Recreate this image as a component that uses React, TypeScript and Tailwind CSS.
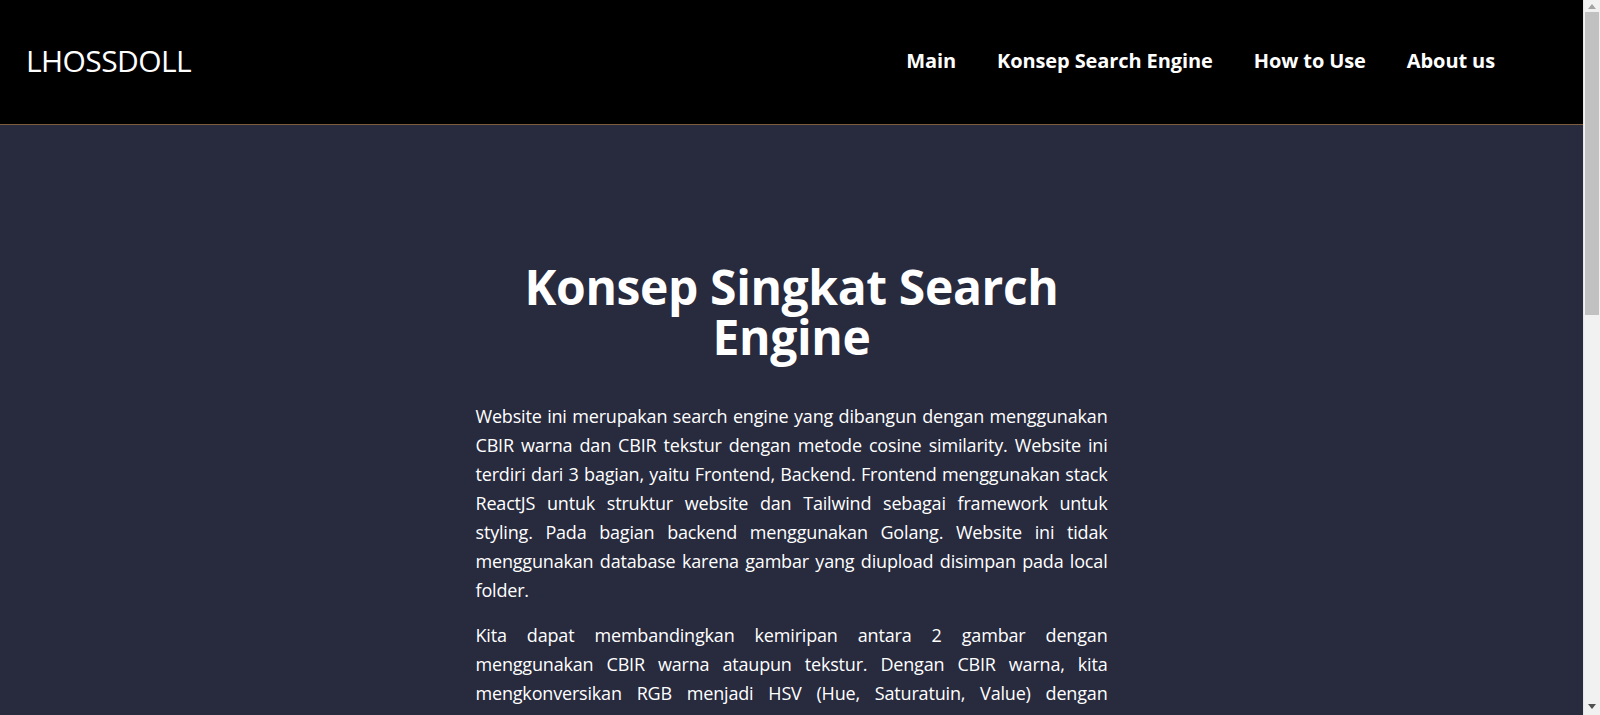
import React from 'react';

const navLinks = ['Main', 'Konsep Search Engine', 'How to Use', 'About us'];

const Navbar: React.FC = () => {
  return (
    <header className="flex h-[125px] items-center justify-between border-b border-[#7c5c3c] bg-black pb-[2px] pl-[26px] pr-[88px]">
      <a href="#" className="mb-[1px] text-[30px] tracking-[-0.02em] text-white">LHOSSDOLL</a>
      <nav className="flex items-center gap-[41px]">
        {navLinks.map((link) => (
          <a key={link} href="#" className="text-[20px] font-bold tracking-[-0.005em] text-white">
            {link}
          </a>
        ))}
      </nav>
    </header>
  );
}

// window scrollbar as seen in the screenshot
const ScrollBar: React.FC = () => {
  return (
    <aside className="flex w-[17px] shrink-0 flex-col border-l border-[#e6e6e6] bg-[#f1f1f1]">
      <div className="flex h-[12px] items-center justify-center">
        <svg width="8" height="5" viewBox="0 0 8 5">
          <path d="M4 0 L8 5 L0 5 Z" fill="#a3a3a3" />
        </svg>
      </div>
      <div className="mx-[1px] h-[303px] bg-[#c1c1c1]" />
      <div className="flex-1" />
      <div className="flex h-[17px] items-center justify-center">
        <svg width="8" height="5" viewBox="0 0 8 5">
          <path d="M0 0 L8 0 L4 5 Z" fill="#505050" />
        </svg>
      </div>
    </aside>
  );
}

export default function App() {
  return (
    <div className="flex h-screen bg-[#282a3e] font-['Open_Sans',sans-serif]">
      <main className="min-w-0 flex-1 overflow-hidden">
        <Navbar />

        {/* Konsep section */}
        <section className="mx-auto max-w-[672px] px-5 pt-[137px] pb-40">
          <h1 className="mb-[40px] text-center text-[48px] leading-[50px] font-bold tracking-[-0.008em] text-white">
            Konsep Singkat Search Engine
          </h1>
          <p className="mb-4 text-justify text-[18px] leading-[29px] tracking-[-0.01em] text-white">
            Website ini merupakan search engine yang dibangun dengan menggunakan CBIR warna dan CBIR tekstur dengan
            metode cosine similarity. Website ini terdiri dari 3 bagian, yaitu Frontend, Backend. Frontend menggunakan
            stack ReactJS untuk struktur website dan Tailwind sebagai framework untuk styling. Pada bagian backend
            menggunakan Golang. Website ini tidak menggunakan database karena gambar yang diupload disimpan pada local
            folder.
          </p>
          <p className="mb-4 text-justify text-[18px] leading-[29px] tracking-[-0.01em] text-white">
            Kita dapat membandingkan kemiripan antara 2 gambar dengan menggunakan CBIR warna ataupun tekstur. Dengan
            CBIR warna, kita mengkonversikan RGB menjadi HSV (Hue, Saturatuin, Value) dengan mengelompokkan nilai-nilai
            tersebut ke dalam beberapa bin histogram, kemudian vektor histogram dari kedua gambar dibandingkan
            menggunakan cosine similarity.
          </p>
        </section>
      </main>
      <ScrollBar />
    </div>
  );
}
